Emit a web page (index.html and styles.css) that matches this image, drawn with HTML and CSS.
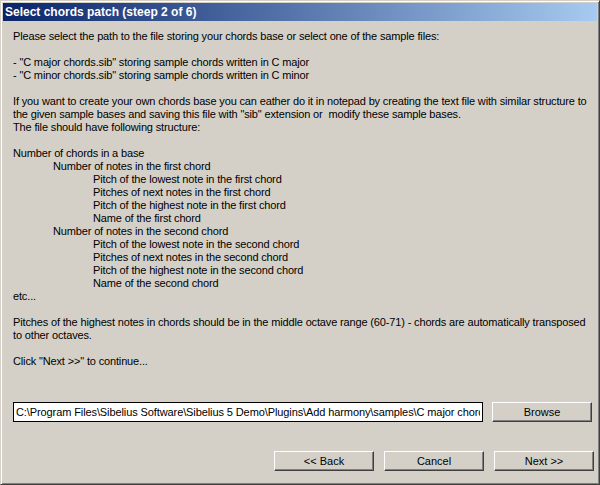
FILE: index.html
```html
<!DOCTYPE html>
<html lang="en">

<head>
    <meta charset="UTF-8">
    <title>Select chords patch</title>
    <link rel="stylesheet" href="styles.css">
</head>

<body>

    <div class="dialog">
        <div class="titlebar">Select chords patch (steep 2 of 6)</div>

        <div class="dialog-body">
            <div class="info">
                <p>Please select the path to the file storing your chords base or select one of the sample files:</p>
                <p>- "C major chords.sib" storing sample chords written in C major<br>
                   - "C minor chords.sib" storing sample chords written in C minor</p>
                <p>If you want to create your own chords base you can eather do it in notepad by creating the text file with similar structure to<br>
                   the given sample bases and saving this file with "sib" extension or&nbsp; modify these sample bases.<br>
                   The file should have following structure:</p>
                <div class="structure">
                    <div>Number of chords in a base</div>
                    <div class="lvl1">Number of notes in the first chord</div>
                    <div class="lvl2">Pitch of the lowest note in the first chord</div>
                    <div class="lvl2">Pitches of next notes in the first chord</div>
                    <div class="lvl2">Pitch of the highest note in the first chord</div>
                    <div class="lvl2">Name of the first chord</div>
                    <div class="lvl1">Number of notes in the second chord</div>
                    <div class="lvl2">Pitch of the lowest note in the second chord</div>
                    <div class="lvl2">Pitches of next notes in the second chord</div>
                    <div class="lvl2">Pitch of the highest note in the second chord</div>
                    <div class="lvl2">Name of the second chord</div>
                    <div>etc...</div>
                </div>
                <p>Pitches of the highest notes in chords should be in the middle octave range (60-71) - chords are automatically transposed<br>
                   to other octaves.</p>
                <p>Click "Next &gt;&gt;" to continue...</p>
            </div>

            <div class="path-row">
                <input type="text" class="path" value="C:\Program Files\Sibelius Software\Sibelius 5 Demo\Plugins\Add harmony\samples\C major chords.sib">
                <button class="btn">Browse</button>
            </div>

            <div class="nav-buttons">
                <button class="btn">&lt;&lt; Back</button>
                <button class="btn">Cancel</button>
                <button class="btn">Next &gt;&gt;</button>
            </div>
        </div>
    </div>

</body>

</html>
```

FILE: styles.css
```css
body {
    margin: 0;
    padding: 0;
    background: #d4d0c8;
    font-family: "Liberation Sans", Arial, sans-serif;
    font-size: 11px;
    color: #000;
}

.dialog {
    width: 600px;
    height: 485px;
    box-sizing: border-box;
    background: #d4d0c8;
    border: 1px solid;
    border-color: #d4d0c8 #404040 #404040 #d4d0c8;
    box-shadow: inset 1px 1px #fff, inset -1px -1px #808080;
    padding: 2px;
    display: flex;
    flex-direction: column;
}

.titlebar {
    height: 18px;
    line-height: 18px;
    padding-left: 2px;
    background: linear-gradient(to right, #0a246a, #a6caf0);
    color: #fff;
    font-weight: bold;
    font-size: 12px;
}

.dialog-body {
    flex: 1;
    padding: 9px 3px 0 10px;
    display: flex;
    flex-direction: column;
}

.info {
    line-height: 13px;
    letter-spacing: -0.15px;
}

.info p {
    margin: 0 0 13px 0;
}

.structure {
    margin-bottom: 13px;
}

.lvl1 {
    padding-left: 40px;
}

.lvl2 {
    padding-left: 80px;
}

.path-row {
    display: flex;
    align-items: center;
    gap: 9px;
    margin-top: 21px;
}

.path {
    width: 470px;
    height: 20px;
    box-sizing: border-box;
    border: 1px solid #000;
    padding: 0 2px;
    margin: 0;
    font-family: "Liberation Sans", Arial, sans-serif;
    font-size: 11px;
    letter-spacing: -0.1px;
    background: #fff;
    outline: none;
}

.btn {
    width: 100px;
    height: 20px;
    box-sizing: border-box;
    margin: 0;
    padding: 0;
    background: #d4d0c8;
    border: 1px solid;
    border-color: #fff #404040 #404040 #fff;
    box-shadow: inset -1px -1px #808080;
    font-family: "Liberation Sans", Arial, sans-serif;
    font-size: 11px;
    color: #000;
}

.nav-buttons {
    display: flex;
    justify-content: flex-end;
    gap: 10px;
    margin-top: 29px;
}
```
